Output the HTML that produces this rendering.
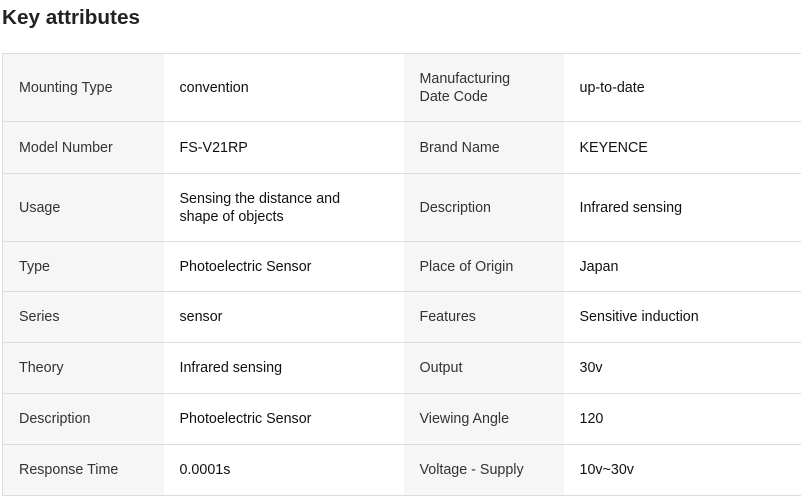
<!DOCTYPE html>
<html><head><style>
body{margin:0;background:#fff;font-family:"Liberation Sans",sans-serif;color:#222;width:801px;height:497px;overflow:hidden}
h2{position:absolute;left:2px;top:6px;margin:0;font-size:20.7px;font-weight:bold;color:#222}
table{position:absolute;left:2px;top:53px;border-collapse:collapse;width:805px;font-size:14.3px;table-layout:fixed}
td{border-top:1px solid #dcdcdc;border-bottom:1px solid #dcdcdc;padding:0 16px;line-height:18px;vertical-align:middle;white-space:nowrap}
td:first-child{border-left:1px solid #dcdcdc}
td.l{background:#f6f6f6;color:#333}
td.v{color:#111}
</style></head><body>
<h2>Key attributes</h2>
<table>
<colgroup><col style="width:161px"><col style="width:240px"><col style="width:160px"><col style="width:244px"></colgroup>
<tr style="height:68px"><td class="l">Mounting Type</td><td class="v">convention</td><td class="l">Manufacturing<br>Date Code</td><td class="v">up-to-date</td></tr>
<tr style="height:52px"><td class="l">Model Number</td><td class="v">FS-V21RP</td><td class="l">Brand Name</td><td class="v">KEYENCE</td></tr>
<tr style="height:68px"><td class="l">Usage</td><td class="v">Sensing the distance and<br>shape of objects</td><td class="l">Description</td><td class="v">Infrared sensing</td></tr>
<tr style="height:50px"><td class="l">Type</td><td class="v">Photoelectric Sensor</td><td class="l">Place of Origin</td><td class="v">Japan</td></tr>
<tr style="height:51px"><td class="l">Series</td><td class="v">sensor</td><td class="l">Features</td><td class="v">Sensitive induction</td></tr>
<tr style="height:51px"><td class="l">Theory</td><td class="v">Infrared sensing</td><td class="l">Output</td><td class="v">30v</td></tr>
<tr style="height:51px"><td class="l">Description</td><td class="v">Photoelectric Sensor</td><td class="l">Viewing Angle</td><td class="v">120</td></tr>
<tr style="height:51px"><td class="l">Response Time</td><td class="v">0.0001s</td><td class="l">Voltage - Supply</td><td class="v">10v~30v</td></tr>
</table>
</body></html>
